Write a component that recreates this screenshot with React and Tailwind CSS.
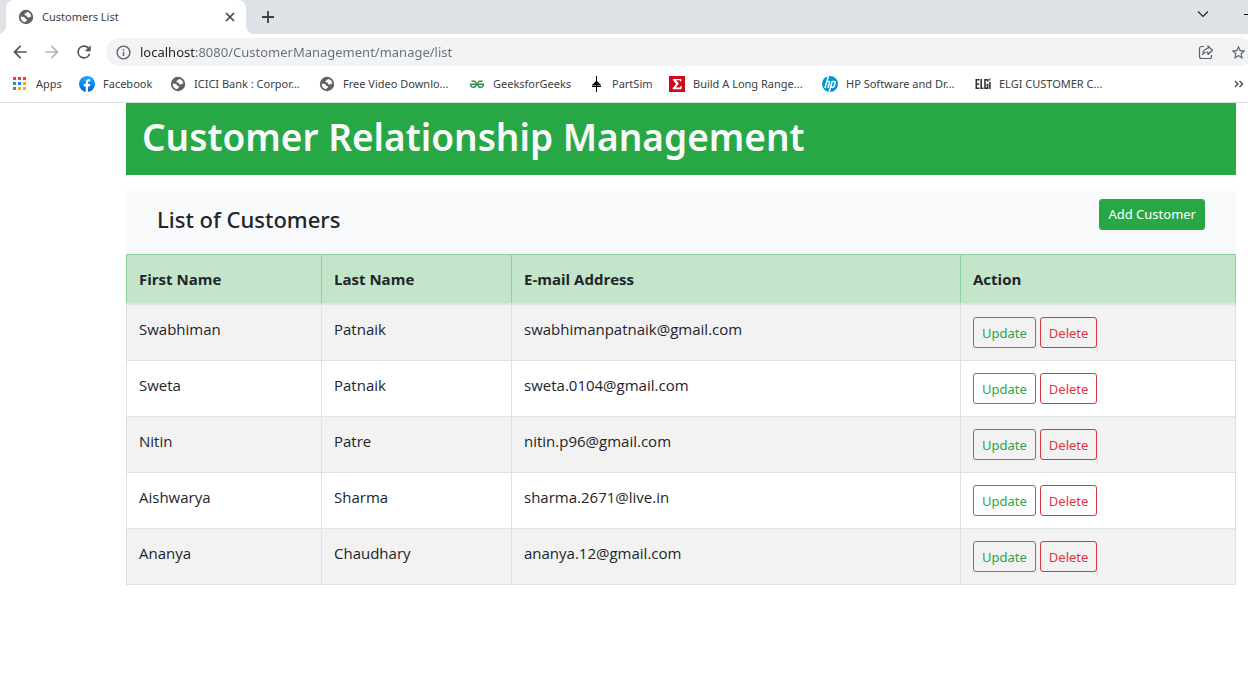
import React from "react";

const icon = "shrink-0 block";

function Globe() {
  return (
    <svg className={icon} width="16" height="16" viewBox="0 0 16 16" aria-hidden="true">
      <circle cx="8" cy="8" r="7.200" fill="#5f6368" />
      <path d="M9 3c-.9.500-.7 1.300-1.700 1.600-.9.300-1.200.9-.6 1.500.5.600 1.400.3 2 .9.700.600.3 1.400 1.300 1.600 1.100.2 1.200-.8 2.100-.8h1.200A5.300 5.300 0 0 0 9 3z" fill="#fff" />
      <path d="M2.600 7.700c1.600 0 3.200.1 4 .7.900.700.500 1.400 1.300 1.700.8.400 1.400.3 1.300 1-.1.800-1.300.8-1.600 1.500l-.2.700A5.400 5.400 0 0 1 2.600 7.700z" fill="#fff" />
    </svg>
  );
}

function AppsIcon() {
  const cells = [
    ["#ea4335", 0, 0], ["#ea4335", 5, 0], ["#ea4335", 10, 0],
    ["#34a060", 0, 5], ["#1a88f0", 5, 5], ["#f9ab00", 10, 5],
    ["#34a060", 0, 10], ["#f9ab00", 5, 10], ["#f9ab00", 10, 10],
  ];
  return (
    <svg className={icon} width="16" height="16" viewBox="-1 -1 16 16" aria-hidden="true">
      {cells.map(([c, x, y]) => <rect key={`${x}-${y}`} x={x} y={y} width="3" height="3" fill={c} />)}
    </svg>
  );
}

function FacebookIcon() {
  return (
    <svg className={icon} width="16" height="16" viewBox="0 0 16 16" aria-hidden="true">
      <defs>
        <linearGradient id="fb" x1="0" y1="0" x2="0" y2="1">
          <stop offset="0" stopColor="#18acfe" />
          <stop offset="1" stopColor="#0163e0" />
        </linearGradient>
      </defs>
      <circle cx="8" cy="8" r="8" fill="url(#fb)" />
      <path d="M6.700 16v-5.600H4.700V8h2V6.400c0-2.100 1.200-3.200 3-3.200.700 0 1.500.1 1.500.1v2h-1c-.9 0-1.200.6-1.200 1.200V8h2.200l-.4 2.400H9V16a8 8 0 0 1-2.300 0z" fill="#fff" />
    </svg>
  );
}

function GeeksIcon() {
  return (
    <svg className={icon} width="16" height="16" viewBox="0 0 16 16" fill="none" stroke="#2f8d46" strokeWidth="1.400" aria-hidden="true">
      <path d="M2.500 5.200h2.700C7.800 5.200 7.900 11 4.800 11.200 2.500 11.300 1.500 10 1.500 8.200h13c0 1.800-1 3.100-3.300 3C8.100 11 8.200 5.200 10.800 5.200h2.700" />
    </svg>
  );
}

function PartSimIcon() {
  return (
    <svg className={icon} width="16" height="16" viewBox="0 0 16 16" aria-hidden="true">
      <path d="M8 0h1v5L12.500 8.500H13v1H9V16H8V9.500H4v-1h.5L8 5z" fill="#000" />
      <path d="M4 10h9v1H4z" fill="#000" />
    </svg>
  );
}

function SigmaIcon() {
  return (
    <svg className={icon} width="16" height="16" viewBox="0 0 16 16" aria-hidden="true">
      <rect width="16" height="16" fill="#cc0d1a" />
      <path d="M4 3h8.300v2.500h-1L10.800 4.200H7.300L9.800 7.700 6.800 11.600h4.200l.8-1.600h1L12.300 13.300H3.700v-1L7 8 4 4z" fill="#fff" />
    </svg>
  );
}

function HpIcon() {
  return (
    <svg className={icon} width="16" height="16" viewBox="0 0 16 16" aria-hidden="true">
      <circle cx="8" cy="8" r="8" fill="#0096d6" />
      <g fill="none" stroke="#fff" strokeWidth="1.500">
        <path d="M6.400 0 3 12M4.800 5.400h1.900c.8 0 1 .5.800 1.200L6 12" />
        <path d="M7.200 16 10.200 5.400h2c.9 0 1.200.5 1 1.200l-1.100 3.700c-.2.700-.6 1-1.300 1H8.700" />
      </g>
    </svg>
  );
}

function ElgiIcon() {
  return (
    <svg className={icon} width="16" height="16" viewBox="0 0 16 16" aria-hidden="true">
      <g fill="none" stroke="#333" strokeWidth="1.600">
        <path d="M4.500 3.800H1.300v8.400h3.200M1.300 8h2.900M6.200 3v9.200h2.300M12.800 5.800V3.800H10v8.400h2.600V8.500h-1.100" />
        <path d="M14.900 6v7" />
      </g>
      <rect x="14.100" y="2.500" width="1.600" height="2" fill="#d33" />
    </svg>
  );
}

const bookmarks = [
  { label: "Apps", Icon: AppsIcon, width: "w-[67px]" },
  { label: "Facebook", Icon: FacebookIcon, width: "w-[91px]" },
  { label: "ICICI Bank : Corpor...", Icon: Globe, width: "w-[149px]" },
  { label: "Free Video Downlo...", Icon: Globe, width: "w-[150px]" },
  { label: "GeeksforGeeks", Icon: GeeksIcon, width: "w-[119px]" },
  { label: "PartSim", Icon: PartSimIcon, width: "w-[81px]" },
  { label: "Build A Long Range...", Icon: SigmaIcon, width: "w-[153px]" },
  { label: "HP Software and Dr...", Icon: HpIcon, width: "w-[153px]" },
  { label: "ELGI CUSTOMER C...", Icon: ElgiIcon, width: "w-[140px]" },
];

function TabStrip() {
  return (
    <div className="flex h-[34px] overflow-hidden bg-[#dee1e6] pl-1.5">
      <div className="relative flex w-60 items-center rounded-t-lg bg-white pr-2.5 pl-3">
        <svg className="absolute bottom-0 -left-2" width="8" height="8" aria-hidden="true"><path d="M8 0v8H0a8 8 0 0 0 8-8z" fill="#fff" /></svg>
        <svg className="absolute -right-2 bottom-0" width="8" height="8" aria-hidden="true"><path d="M0 0v8h8a8 8 0 0 1-8-8z" fill="#fff" /></svg>
        <Globe />
        <span className="ml-2 flex-1 font-['Noto_Sans',sans-serif] text-[11px] text-[#3c4043]">Customers List</span>
        <button type="button" aria-label="Close tab" className="flex size-3 items-center justify-center">
          <svg width="12" height="12" viewBox="0 0 12 12" stroke="#3c4043" strokeWidth="1.600" aria-hidden="true"><path d="m2 2 8 8M10 2l-8 8" /></svg>
        </button>
      </div>
      <button type="button" aria-label="New tab" className="ml-3.5 flex w-4 items-center justify-center">
        <svg width="14" height="14" viewBox="0 0 14 14" stroke="#3c4043" strokeWidth="1.800" aria-hidden="true"><path d="M7 1v12M1 7h12" /></svg>
      </button>
      <div className="ml-auto flex h-7 items-center">
        <button type="button" aria-label="Search tabs" className="mr-[35px]">
          <svg width="12" height="12" viewBox="0 0 12 12" fill="none" stroke="#202124" strokeWidth="1.100" aria-hidden="true"><path d="m1 3.500 5 5 5-5" /></svg>
        </button>
        <button type="button" aria-label="Minimize" className="w-1 overflow-hidden">
          <svg width="10" height="12" viewBox="0 0 10 12" aria-hidden="true"><path d="M0 6h10v1H0z" fill="#000" /></svg>
        </button>
      </div>
    </div>
  );
}

function Toolbar() {
  return (
    <div className="flex h-8 items-end overflow-hidden bg-white pl-2.5">
      <div className="flex h-7 items-center gap-3">
        <button type="button" aria-label="Back"><svg width="20" height="20" viewBox="0 0 24 24" fill="#4f5357" aria-hidden="true"><path d="M20 11H7.830l5.590-5.590L12 4l-8 8 8 8 1.410-1.410L7.830 13H20z" /></svg></button>
        <button type="button" aria-label="Forward" disabled><svg width="20" height="20" viewBox="0 0 24 24" fill="#b4b6b8" aria-hidden="true"><path d="m12 4-1.410 1.410L16.170 11H4v2h12.170l-5.580 5.590L12 20l8-8z" /></svg></button>
        <button type="button" aria-label="Reload"><svg width="20" height="20" viewBox="0 0 24 24" fill="#4f5357" aria-hidden="true"><path d="M17.650 6.350A7.960 7.960 0 0 0 12 4a8 8 0 1 0 7.730 10h-2.080A6 6 0 1 1 12 6c1.660 0 3.140.69 4.220 1.780L13 11h7V4z" /></svg></button>
      </div>
      <div className="-mr-1.5 ml-3 flex h-7 flex-1 items-center rounded-full bg-[#f1f3f4] pr-[7px] pl-[9px]">
        <svg className={icon} width="17" height="17" viewBox="0 0 24 24" fill="#5f6368" aria-hidden="true"><path d="M11 7h2v2h-2zm0 4h2v6h-2zm1-9a10 10 0 1 0 0 20 10 10 0 0 0 0-20zm0 18a8 8 0 1 1 0-16 8 8 0 0 1 0 16z" /></svg>
        <input
          type="text"
          aria-label="Address"
          defaultValue="localhost:8080/CustomerManagement/manage/list"
          className="ml-2 h-6 min-w-0 flex-1 bg-linear-[90deg,#202124_56px,#6a6e73_56px] bg-clip-text font-['Noto_Sans',sans-serif] text-[13px] text-transparent outline-none"
        />
        <button type="button" aria-label="Share" className="mr-4">
          <svg width="16" height="16" viewBox="0 0 16 16" fill="none" stroke="#5f6368" strokeWidth="1.200" aria-hidden="true"><path d="M6 2.500H3.500a2 2 0 0 0-2 2v8a2 2 0 0 0 2 2h8a2 2 0 0 0 2-2V11" /><path d="M10 2v2.500C6.800 4.800 5 7 4.700 10.500 6 8.700 7.600 8 10 8v2.500L14.500 6.200z" strokeLinejoin="round" /></svg>
        </button>
        <button type="button" aria-label="Bookmark this page">
          <svg width="17" height="17" viewBox="0 0 24 24" fill="#5f6368" aria-hidden="true"><path d="m22 9.240-7.190-.62L12 2 9.190 8.630 2 9.240l5.460 4.730L5.820 21 12 17.270 18.180 21l-1.630-7.030zM12 15.400l-3.760 2.270 1-4.280-3.320-2.880 4.380-.38L12 6.100l1.710 4.040 4.380.38-3.320 2.880 1 4.280z" /></svg>
        </button>
      </div>
    </div>
  );
}

function BookmarksBar() {
  return (
    <nav aria-label="Bookmarks" className="flex h-[37px] items-center overflow-hidden border-b border-[#dadce0] bg-white pr-1 pl-3">
      {bookmarks.map(({ label, Icon, width }) => (
        <a key={label} href="#" className={`flex shrink-0 items-center gap-2 font-['Noto_Sans',sans-serif] text-[11px] whitespace-nowrap text-[#3c4043] ${width}`}>
          <Icon />
          {label}
        </a>
      ))}
      <button type="button" aria-label="More bookmarks" className="ml-auto">
        <svg width="10" height="10" viewBox="0 0 10 10" fill="none" stroke="#4f5357" strokeWidth="1.500" aria-hidden="true"><path d="m1 2 3 3-3 3M5.500 2l3 3-3 3" /></svg>
      </button>
    </nav>
  );
}

const customers = [
  ["Swabhiman", "Patnaik", "swabhimanpatnaik@gmail.com"],
  ["Sweta", "Patnaik", "sweta.0104@gmail.com"],
  ["Nitin", "Patre", "nitin.p96@gmail.com"],
  ["Aishwarya", "Sharma", "sharma.2671@live.in"],
  ["Ananya", "Chaudhary", "ananya.12@gmail.com"],
];

const th = "border border-b-2 border-[#8fd19e] border-b-[#dee2e6] p-3 text-left font-bold";
const td = "border border-[#dee2e6] p-3 align-top";
const small = "h-[31px] rounded-[3px] border px-2 font-['Noto_Sans',sans-serif] text-[13px]";

function CustomerTable() {
  return (
    <table className="w-full border-collapse text-[15px] leading-6">
      <thead>
        <tr className="bg-[#c3e6cb]">
          <th scope="col" className={`w-[195px] ${th}`}>First Name</th>
          <th scope="col" className={`w-[190px] ${th}`}>Last Name</th>
          <th scope="col" className={`w-[449px] ${th}`}>E-mail Address</th>
          <th scope="col" className={th}>Action</th>
        </tr>
      </thead>
      <tbody>
        {customers.map(([first, last, email]) => (
          <tr key={email} className="odd:bg-[#f2f2f2]">
            <td className={td}>{first}</td>
            <td className={td}>{last}</td>
            <td className={td}>{email}</td>
            <td className={td}>
              <div className="flex gap-1">
                <button type="button" className={`border-[#28a745] text-[#28a745] ${small}`}>Update</button>
                <button type="button" className={`border-[#dc3545] text-[#dc3545] ${small}`}>Delete</button>
              </div>
            </td>
          </tr>
        ))}
      </tbody>
    </table>
  );
}

export default function App() {
  return (
    <div className="min-h-screen bg-white font-['Open_Sans','Noto_Sans',sans-serif] text-[#212529]">
      <header>
        <TabStrip />
        <Toolbar />
        <BookmarksBar />
      </header>
      <main className="pr-3 pl-[126px]">
        <div className="mb-4 bg-[#28a745] px-4 pt-2.5 pb-3.5">
          <h1 className="font-['Noto_Sans',sans-serif] text-[37px] leading-[48px] font-semibold text-[#f8f9fa]">Customer Relationship Management</h1>
        </div>
        <section>
          <div className="flex h-[63px] items-start justify-between bg-[#f8f9fa] px-[31px] pt-2">
            <h2 className="pt-1.5 font-['Noto_Sans',sans-serif] text-[22px] leading-7 font-medium">List of Customers</h2>
            <button type="button" className={`border-[#28a745] bg-[#28a745] text-white ${small}`}>Add Customer</button>
          </div>
          <CustomerTable />
        </section>
      </main>
    </div>
  );
}
